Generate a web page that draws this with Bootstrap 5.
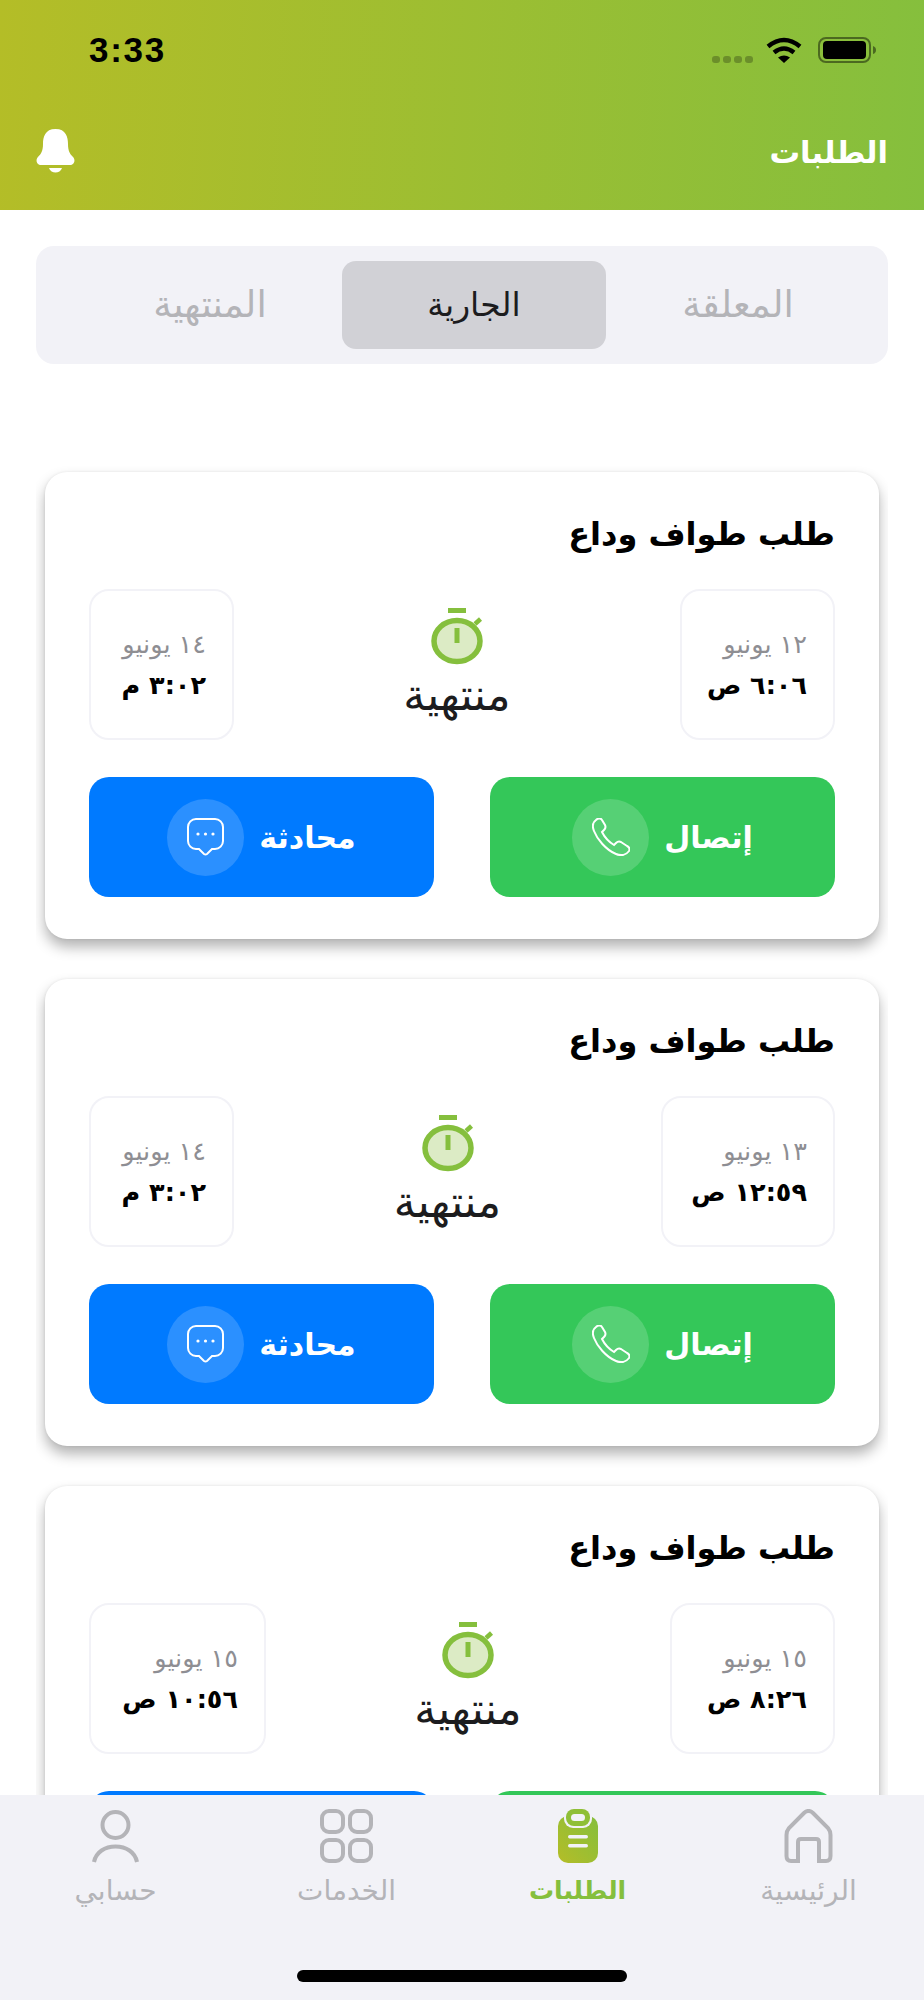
<!doctype html>
<html lang="ar" dir="rtl">
<head>
<meta charset="utf-8">
<link href="https://cdn.jsdelivr.net/npm/bootstrap@5.3.0/dist/css/bootstrap.min.css" rel="stylesheet">
<style>
html,body{margin:0;height:2000px;overflow:hidden}
body{font-family:"DejaVu Sans",sans-serif;background:#fff;color:#000}
.shell{height:2000px}
.top-bar{height:210px;flex:none;background:linear-gradient(93deg,#b4bd27 0%,#85bf3d 100%);padding:0 36px}
.stat-row{height:100px;padding:37px 11px 0 53px}
.clock{font-family:"Liberation Sans",sans-serif;font-size:35px;line-height:26px;letter-spacing:1.7px;font-weight:700;color:#000}
.sig-dot{width:8px;height:7px;border-radius:3px;background:rgba(0,0,0,.25);margin-left:3px}
.sig-wrap{margin-top:19px;margin-right:13px}
.head-row{height:73px;margin-top:-1px}
.head-title{font-size:30.5px;font-weight:700;color:#fff;line-height:40px;margin-top:34px}
.bell-ico{margin-top:30px}
.seg-wrap{margin:36px 36px 0;height:118px;flex:none;background:#f2f2f7;border-radius:18px;padding:15px 18px 15px 40px}
.seg-item{width:264px;height:88px;border-radius:14px;color:#b4b4b8;font-size:37px;line-height:44px;font-family:"DejaVu Sans",sans-serif;border:0;background:none;padding:0}
.seg-item.is-on{background:#d1d1d6;color:#1c1c1e;font-size:33px}
.scroll-area{margin:96px 36px 0;padding:12px 9px 0;overflow:hidden;min-height:0}
.job-card{height:467px;border:0;border-radius:22px;background:#fff;box-shadow:0 8px 14px rgba(0,0,0,.3),0 0 3px rgba(0,0,0,.08);padding:40px 44px;margin-bottom:40px;flex:none}
.job-title{font-size:32px;font-weight:700;line-height:44px;margin:0 0 33px;color:#000}
.date-row{height:151px;margin-bottom:37px}
.date-box{height:151px;border:2px solid #f2f2f7;border-radius:20px;padding:0 26px;flex:none}
.date-a{width:155px}.date-b{width:145px}.date-c{width:174px}.date-d{width:165px}.date-e{width:177px}
.date-day{font-size:25.5px;color:#8e8e93;line-height:30px;margin-bottom:10px;white-space:nowrap}
.date-time{font-size:25.5px;font-weight:700;line-height:32px;color:#000;white-space:nowrap}
.stat-col svg{display:block}
.stat-text{font-size:44px;line-height:40px;color:#1c1c1e;margin-top:10px;margin-bottom:6px}
.act-btn{width:345px;height:120px;border-radius:20px;border:0;color:#fff;font-weight:700;font-size:30px;gap:15px;padding:0}
.act-call,.act-call:hover{background:#34c759;color:#fff}
.act-chat,.act-chat:hover{background:#007aff;color:#fff}
.act-ring{width:77px;height:77px;border-radius:50%;background:rgba(255,255,255,.17);flex:none}
.tab-bar{height:205px;background:#f2f2f7;flex:none;position:relative}
.tab-cell{width:231px;padding-top:14px}
.tab-cell svg{display:block;height:54px}
.tab-label{font-size:28px;line-height:36px;color:#b4b4b8;margin-top:10px;white-space:nowrap}
.tab-cell.is-on .tab-label{color:#85bf3d;font-weight:700;font-size:25px}
.home-line{width:330px;height:12px;background:#000;border-radius:6px;position:absolute;left:297px;top:175px}
</style>
</head>
<body>
<div class="shell d-flex flex-column">
  <header class="top-bar">
    <div class="stat-row d-flex justify-content-between align-items-start" dir="ltr">
      <div class="clock">3:33</div>
      <div class="d-flex align-items-start">
        <div class="sig-wrap d-flex"><span class="sig-dot"></span><span class="sig-dot"></span><span class="sig-dot"></span><span class="sig-dot"></span></div>
        <svg width="36" height="26" viewBox="0 0 36 26"><path d="M2 9.500Q18-3.500 34 9.500" fill="none" stroke="#000" stroke-width="4.500"/><path d="M8 15.500Q18 7.500 28 15.500" fill="none" stroke="#000" stroke-width="4.500"/><path d="M18 26L12 20.500Q18 16.500 24 20.500Z" fill="#000"/></svg>
        <svg class="ms-3" width="59" height="26" viewBox="0 0 59 26"><rect x="1" y="1" width="51" height="24" rx="7" fill="none" stroke="#000" stroke-opacity=".45" stroke-width="2"/><rect x="5" y="4" width="43" height="18" rx="4" fill="#000"/><path d="M55 9Q58 10 58 13T55 17Z" fill="#000" fill-opacity=".45"/></svg>
      </div>
    </div>
    <div class="head-row d-flex justify-content-between align-items-start">
      <div class="head-title">الطلبات</div>
      <svg class="bell-ico" width="39" height="44" viewBox="0 0 39 44"><path d="M19.500 0C9 0 7 8 7 15C7 22 5 25 2 28C-1 31 1 36 5 36H34C38 36 40 31 37 28C34 25 32 22 32 15C32 8 30 0 19.500 0Z" fill="#fff"/><path d="M13 39H26C24 45 15 45 13 39Z" fill="#fff"/></svg>
    </div>
  </header>

  <div class="seg-wrap d-flex">
    <button class="seg-item" type="button">المعلقة</button>
    <button class="seg-item is-on" type="button">الجارية</button>
    <button class="seg-item" type="button">المنتهية</button>
  </div>

  <main class="scroll-area flex-grow-1 d-flex flex-column">
    <article class="card job-card">
      <h2 class="job-title">طلب طواف وداع</h2>
      <div class="date-row d-flex justify-content-between align-items-center">
        <div class="date-box date-a d-flex flex-column justify-content-center"><div class="date-day">١٢ يونيو</div><div class="date-time">٦:٠٦ ص</div></div>
        <div class="stat-col d-flex flex-column align-items-center">
          <svg width="54" height="57" viewBox="-1 0 54 57"><rect x="17" y="0" width="18" height="5" fill="#85bf3d"/><ellipse cx="26" cy="33" rx="23" ry="20.500" fill="#dcebc5" stroke="#85bf3d" stroke-width="5.500"/><rect x="23.500" y="20" width="5" height="15" fill="#85bf3d"/><path d="M44 16L49.500 11" stroke="#85bf3d" stroke-width="4.500"/></svg>
          <div class="stat-text">منتهية</div>
        </div>
        <div class="date-box date-b d-flex flex-column justify-content-center"><div class="date-day">١٤ يونيو</div><div class="date-time">٣:٠٢ م</div></div>
      </div>
      <div class="d-flex justify-content-between">
        <button class="btn act-btn act-call d-flex align-items-center justify-content-center" type="button"><span>إتصال</span><span class="act-ring d-flex align-items-center justify-content-center"><svg width="38" height="38" viewBox="0 0 38 38"><path d="M4 2C1 4 0 8 2 13C5 21 14 32 24 36C29 38 34 37 37 33C38 31 37 29 35 28L29 24C27 23 26 23 24 25L22 27C17 24 12 18 10 14L12 12C14 10 14 9 13 7L10 2C9 0 6 0 4 2Z" fill="none" stroke="#fff" stroke-width="2"/></svg></span></button>
        <button class="btn act-btn act-chat d-flex align-items-center justify-content-center" type="button"><span>محادثة</span><span class="act-ring d-flex align-items-center justify-content-center"><svg width="37" height="38" viewBox="0 0 37 38"><path d="M9 1H28A8 8 0 0 1 36 9V23A8 8 0 0 1 28 31H25L20 36A2.500 2.500 0 0 1 17 36L12 31H9A8 8 0 0 1 1 23V9A8 8 0 0 1 9 1Z" fill="none" stroke="#fff" stroke-width="2"/><circle cx="11" cy="16" r="1.600" fill="#fff"/><circle cx="18.500" cy="16" r="1.600" fill="#fff"/><circle cx="26" cy="16" r="1.600" fill="#fff"/></svg></span></button>
      </div>
    </article>

    <article class="card job-card">
      <h2 class="job-title">طلب طواف وداع</h2>
      <div class="date-row d-flex justify-content-between align-items-center">
        <div class="date-box date-c d-flex flex-column justify-content-center"><div class="date-day">١٣ يونيو</div><div class="date-time">١٢:٥٩ ص</div></div>
        <div class="stat-col d-flex flex-column align-items-center">
          <svg width="54" height="57" viewBox="-1 0 54 57"><rect x="17" y="0" width="18" height="5" fill="#85bf3d"/><ellipse cx="26" cy="33" rx="23" ry="20.500" fill="#dcebc5" stroke="#85bf3d" stroke-width="5.500"/><rect x="23.500" y="20" width="5" height="15" fill="#85bf3d"/><path d="M44 16L49.500 11" stroke="#85bf3d" stroke-width="4.500"/></svg>
          <div class="stat-text">منتهية</div>
        </div>
        <div class="date-box date-b d-flex flex-column justify-content-center"><div class="date-day">١٤ يونيو</div><div class="date-time">٣:٠٢ م</div></div>
      </div>
      <div class="d-flex justify-content-between">
        <button class="btn act-btn act-call d-flex align-items-center justify-content-center" type="button"><span>إتصال</span><span class="act-ring d-flex align-items-center justify-content-center"><svg width="38" height="38" viewBox="0 0 38 38"><path d="M4 2C1 4 0 8 2 13C5 21 14 32 24 36C29 38 34 37 37 33C38 31 37 29 35 28L29 24C27 23 26 23 24 25L22 27C17 24 12 18 10 14L12 12C14 10 14 9 13 7L10 2C9 0 6 0 4 2Z" fill="none" stroke="#fff" stroke-width="2"/></svg></span></button>
        <button class="btn act-btn act-chat d-flex align-items-center justify-content-center" type="button"><span>محادثة</span><span class="act-ring d-flex align-items-center justify-content-center"><svg width="37" height="38" viewBox="0 0 37 38"><path d="M9 1H28A8 8 0 0 1 36 9V23A8 8 0 0 1 28 31H25L20 36A2.500 2.500 0 0 1 17 36L12 31H9A8 8 0 0 1 1 23V9A8 8 0 0 1 9 1Z" fill="none" stroke="#fff" stroke-width="2"/><circle cx="11" cy="16" r="1.600" fill="#fff"/><circle cx="18.500" cy="16" r="1.600" fill="#fff"/><circle cx="26" cy="16" r="1.600" fill="#fff"/></svg></span></button>
      </div>
    </article>

    <article class="card job-card">
      <h2 class="job-title">طلب طواف وداع</h2>
      <div class="date-row d-flex justify-content-between align-items-center">
        <div class="date-box date-d d-flex flex-column justify-content-center"><div class="date-day">١٥ يونيو</div><div class="date-time">٨:٢٦ ص</div></div>
        <div class="stat-col d-flex flex-column align-items-center">
          <svg width="54" height="57" viewBox="-1 0 54 57"><rect x="17" y="0" width="18" height="5" fill="#85bf3d"/><ellipse cx="26" cy="33" rx="23" ry="20.500" fill="#dcebc5" stroke="#85bf3d" stroke-width="5.500"/><rect x="23.500" y="20" width="5" height="15" fill="#85bf3d"/><path d="M44 16L49.500 11" stroke="#85bf3d" stroke-width="4.500"/></svg>
          <div class="stat-text">منتهية</div>
        </div>
        <div class="date-box date-e d-flex flex-column justify-content-center"><div class="date-day">١٥ يونيو</div><div class="date-time">١٠:٥٦ ص</div></div>
      </div>
      <div class="d-flex justify-content-between">
        <button class="btn act-btn act-call" type="button"></button>
        <button class="btn act-btn act-chat" type="button"></button>
      </div>
    </article>
  </main>

  <nav class="tab-bar d-flex">
    <div class="tab-cell d-flex flex-column align-items-center">
      <svg width="49" height="54" viewBox="0 0 49 54"><path d="M14 52H7Q2.500 52 2.500 47V26Q2.500 22 5 19L20 4Q24.500 0 29 4L44 19Q46.500 22 46.500 26V47Q46.500 52 42 52H35V33Q35 30 32 30H17Q14 30 14 33Z" fill="none" stroke="#b4b4b8" stroke-width="4"/></svg>
      <div class="tab-label">الرئيسية</div>
    </div>
    <div class="tab-cell is-on d-flex flex-column align-items-center">
      <svg width="40" height="54" viewBox="0 0 40 54"><defs><linearGradient id="clipGrad" x1="1" y1="0" x2="0" y2="1"><stop offset="0" stop-color="#85bf3d"/><stop offset="1" stop-color="#b4bd27"/></linearGradient></defs><rect x="0" y="7" width="40" height="47" rx="10" fill="url(#clipGrad)"/><rect x="6" y="-1" width="28" height="20" rx="9" fill="#f2f2f7"/><rect x="8" y="0" width="24" height="17" rx="8" fill="#8fbf37"/><rect x="13" y="5" width="14" height="7" rx="3.500" fill="#f2f2f7"/><rect x="10" y="26" width="20" height="3.500" rx="1.700" fill="#f2f2f7"/><rect x="10" y="35" width="20" height="3.500" rx="1.700" fill="#f2f2f7"/></svg>
      <div class="tab-label">الطلبات</div>
    </div>
    <div class="tab-cell d-flex flex-column align-items-center">
      <svg width="53" height="54" viewBox="0 0 53 54"><g fill="none" stroke="#b4b4b8" stroke-width="4"><rect x="2" y="2" width="21" height="21" rx="7"/><rect x="30" y="2" width="21" height="21" rx="7"/><rect x="2" y="31" width="21" height="21" rx="7"/><rect x="30" y="31" width="21" height="21" rx="7"/></g></svg>
      <div class="tab-label">الخدمات</div>
    </div>
    <div class="tab-cell d-flex flex-column align-items-center">
      <svg width="47" height="54" viewBox="0 0 47 54"><g fill="none" stroke="#b4b4b8" stroke-width="4"><circle cx="23.500" cy="16" r="13"/><path d="M2 53C4 43 13 37.500 23.500 37.500S43 43 45 53"/></g></svg>
      <div class="tab-label">حسابي</div>
    </div>
    <span class="home-line"></span>
  </nav>
</div>
<script src="https://cdn.jsdelivr.net/npm/bootstrap@5.3.0/dist/js/bootstrap.bundle.min.js"></script>
</body>
</html>
